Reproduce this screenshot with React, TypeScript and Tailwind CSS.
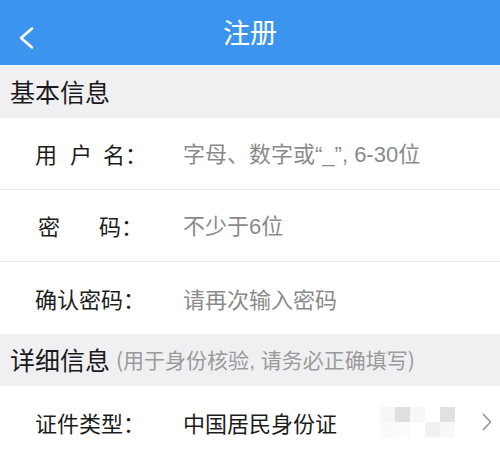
import React from 'react';

const font = { fontFamily: '"Noto Sans CJK SC", "Noto Sans", sans-serif' };
const latin = { fontFamily: '"Liberation Sans", "Noto Sans CJK SC", sans-serif' };

type Row = { label: React.ReactNode; value: React.ReactNode; placeholder?: boolean };

const basicRows: Row[] = [
  {
    label: (
      <span className="flex">
        <span className="w-[35px]">用</span>
        <span className="w-[33px]">户</span>
        <span>名：</span>
      </span>
    ),
    value: (
      <span>
        字母、数字或<span style={latin}>“_”, 6-30</span>位
      </span>
    ),
    placeholder: true,
  },
  {
    label: (
      <span className="flex">
        <span className="w-[64px] pl-[3px]">密</span>
        <span>码：</span>
      </span>
    ),
    value: (
      <span>
        不少于<span style={latin}>6</span>位
      </span>
    ),
    placeholder: true,
  },
  { label: '确认密码：', value: '请再次输入密码', placeholder: true },
];

const FormRow = ({ row, last }: { row: Row; last?: boolean }) => (
  <div className={`flex h-[72px] items-center bg-white ${last ? '' : 'border-b border-[#e6e6e6]'}`}>
    <div className="w-[183px] pl-[35px] text-[22px] text-[#1c1c1c]">{row.label}</div>
    <div className={`text-[22px] ${row.placeholder ? 'text-[#8a8a8a]' : 'text-[#1c1c1c]'}`}>{row.value}</div>
  </div>
);

const App = () => {
  return (
    <div className="w-[500px] h-[450px] overflow-hidden bg-white" style={font}>
      {/* 顶部导航 */}
      <div className="flex h-[65px] items-center bg-[#3c94ee] relative">
        <svg className="absolute left-[17px] top-[27px]" width="18" height="22" viewBox="0 0 18 22" fill="none">
          <path d="M15 1.5 L4 11 L15 20.5" stroke="#ffffff" strokeWidth="2.6" strokeLinecap="round" strokeLinejoin="round" />
        </svg>
        <div className="flex-1 text-center text-[27px] text-white leading-none pb-[2px]">注册</div>
      </div>

      {/* 基本信息 */}
      <div className="flex h-[53px] items-center bg-[#f0f0f2] pl-[10px] text-[25px] text-[#1a1a1a]">基本信息</div>
      {basicRows.map((row, i) => (
        <FormRow key={i} row={row} last={i === basicRows.length - 1} />
      ))}

      {/* 详细信息 */}
      <div className="flex h-[52px] items-center bg-[#f0f0f2] pl-[10px]">
        <span className="text-[25px] text-[#1a1a1a]">详细信息</span>
        <span className="ml-[6px] text-[21px] text-[#9a9a9a]">
          (用于身份核验<span style={latin}>, </span>请务必正确填写)
        </span>
      </div>

      <div className="flex h-[72px] items-center bg-white">
        <div className="w-[183px] pl-[35px] text-[22px] text-[#1c1c1c]">证件类型：</div>
        <div className="flex-1 text-[22px] text-[#1c1c1c]">中国居民身份证</div>
        {/* 打码水印 */}
        <div className="grid grid-cols-6 mr-[12px] opacity-90">
          <div className="w-[15px] h-[15px] bg-[#f6f6f6]" />
          <div className="w-[15px] h-[15px] bg-[#dcdcdc]" />
          <div className="w-[15px] h-[15px] bg-[#f7f7f7]" />
          <div className="w-[15px] h-[15px] bg-white" />
          <div className="w-[15px] h-[15px] bg-[#dedede]" />
          <div className="w-[3px] h-[15px]" />
          <div className="w-[15px] h-[15px] bg-[#fafafa]" />
          <div className="w-[15px] h-[15px] bg-[#fbfbfb]" />
          <div className="w-[15px] h-[15px] bg-white" />
          <div className="w-[15px] h-[15px] bg-[#f0f0f0]" />
          <div className="w-[15px] h-[15px] bg-[#f8f8f8]" />
          <div className="w-[3px] h-[15px]" />
        </div>
        <svg className="mr-[8px]" width="10" height="18" viewBox="0 0 10 18" fill="none">
          <path d="M1.5 1.5 L8.5 9 L1.5 16.5" stroke="#9a9a9a" strokeWidth="1.8" strokeLinecap="round" strokeLinejoin="round" />
        </svg>
      </div>
    </div>
  );
};

export default App;
